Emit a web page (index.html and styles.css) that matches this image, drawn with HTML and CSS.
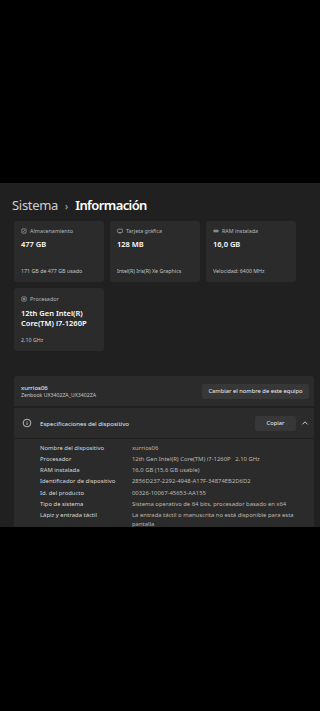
FILE: index.html
```html
<!DOCTYPE html>
<html lang="es">
<head>
<meta charset="utf-8">
<link rel="stylesheet" href="styles.css">
</head>
<body>
<div class="black-top"></div>
<main class="window">
  <h1 class="title"><span class="crumb">Sistema</span><span class="sep">›</span><span class="page">Información</span></h1>

  <section class="tiles">
    <div class="tile">
      <div class="tile-label">
        <svg class="ico" viewBox="0 0 10 10"><rect x="1.5" y="1.5" width="7" height="7" rx="0.8" fill="none" stroke="#bbb" stroke-width="1"/><path d="M3.5 6.5 L6.5 3.5" stroke="#bbb" stroke-width="1"/></svg>
        <span>Almacenamiento</span>
      </div>
      <div class="tile-value">477 GB</div>
      <div class="tile-sub">171 GB de 477 GB usado</div>
    </div>
    <div class="tile">
      <div class="tile-label">
        <svg class="ico" viewBox="0 0 10 10"><rect x="1" y="2" width="8" height="5.5" rx="0.8" fill="none" stroke="#bbb" stroke-width="1"/><path d="M3.5 8.7 H6.5" stroke="#bbb" stroke-width="0.9"/></svg>
        <span>Tarjeta gráfica</span>
      </div>
      <div class="tile-value">128 MB</div>
      <div class="tile-sub">Intel(R) Iris(R) Xe Graphics</div>
    </div>
    <div class="tile">
      <div class="tile-label">
        <svg class="ico" viewBox="0 0 10 10"><rect x="1" y="3" width="8" height="4" rx="0.5" fill="#aaa"/><path d="M3 3 V7 M5 3 V7 M7 3 V7" stroke="#2b2b2b" stroke-width="0.6"/></svg>
        <span>RAM instalada</span>
      </div>
      <div class="tile-value">16,0 GB</div>
      <div class="tile-sub">Velocidad: 6400 MHz</div>
    </div>
    <div class="tile tile-cpu">
      <div class="tile-label">
        <svg class="ico" viewBox="0 0 10 10"><rect x="1.5" y="1.5" width="7" height="7" rx="0.8" fill="none" stroke="#bbb" stroke-width="1"/><rect x="3.5" y="3.5" width="3" height="3" fill="#999"/></svg>
        <span>Procesador</span>
      </div>
      <div class="tile-value cpu-value">12th Gen Intel(R)<br>Core(TM) i7-1260P</div>
      <div class="tile-sub">2.10 GHz</div>
    </div>
  </section>

  <section class="device">
    <div class="device-names">
      <div class="device-name">xurrios06</div>
      <div class="device-model">Zenbook UX3402ZA_UX3402ZA</div>
    </div>
    <button class="btn rename">Cambiar el nombre de este equipo</button>
  </section>

  <section class="specs">
    <div class="specs-head">
      <svg class="info" viewBox="0 0 12 12"><circle cx="6" cy="6" r="4.6" fill="none" stroke="#e6e6e6" stroke-width="0.9"/><path d="M6 5.3 V8.4" stroke="#e6e6e6" stroke-width="0.9"/><circle cx="6" cy="3.8" r="0.55" fill="#e6e6e6"/></svg>
      <span class="specs-title">Especificaciones del dispositivo</span>
      <button class="btn copy">Copiar</button>
      <svg class="chev" viewBox="0 0 10 10"><path d="M2.5 6.3 L5 3.8 L7.5 6.3" fill="none" stroke="#ddd" stroke-width="0.9"/></svg>
    </div>
    <dl class="specs-body">
      <dt>Nombre del dispositivo</dt><dd>xurrios06</dd>
      <dt>Procesador</dt><dd>12th Gen Intel(R) Core(TM) i7-1260P&nbsp;&nbsp;&nbsp;2.10 GHz</dd>
      <dt>RAM instalada</dt><dd>16,0 GB (15,6 GB usable)</dd>
      <dt>Identificador de dispositivo</dt><dd>2856D237-2292-4948-A17F-34874EB2D6D2</dd>
      <dt>Id. del producto</dt><dd>00326-10067-45653-AA155</dd>
      <dt>Tipo de sistema</dt><dd>Sistema operativo de 64 bits, procesador basado en x64</dd>
      <dt>Lápiz y entrada táctil</dt><dd>La entrada táctil o manuscrita no está disponible para esta pantalla</dd>
    </dl>
  </section>
</main>
</body>
</html>
```

FILE: styles.css
```css
* { box-sizing: border-box; }
html, body { margin: 0; padding: 0; background: #000; }
body {
  width: 320px;
  height: 711px;
  overflow: hidden;
  font-family: "Noto Sans", "Open Sans", sans-serif;
  color: #fff;
}
.black-top { height: 183px; }
.window {
  height: 344px;
  overflow: hidden;
  background: #202020;
  padding: 14px 6px 0 14px;
}
.title {
  margin: 0 0 0 -2px;
  font-size: 13px;
  line-height: 16px;
  font-weight: 400;
  display: flex;
  align-items: baseline;
}
.crumb { color: #cfcfcf; letter-spacing: -0.3px; }
.sep { color: #bbb; font-size: 10px; margin: 0 7px 0 7px; }
.page { font-weight: 600; color: #fff; letter-spacing: -0.6px; }

.tiles {
  margin-top: 7px;
  width: 282px;
  display: grid;
  grid-template-columns: repeat(3, 1fr);
  column-gap: 6px;
  row-gap: 6px;
}
.tile {
  background: #2b2b2b;
  border-radius: 3px;
  height: 61px;
  padding: 6px 7px 7px 7px;
  display: flex;
  flex-direction: column;
}
.tile-cpu { height: 63px; padding-top: 7px; }
.tile-label {
  display: flex;
  align-items: center;
  gap: 3px;
  font-size: 5.4px;
  line-height: 8px;
  color: #b8b8b8;
}
.ico { width: 6px; height: 6px; flex: none; }
.tile-value {
  margin-top: 4px;
  font-size: 7.5px;
  line-height: 10px;
  font-weight: 600;
  color: #fff;
}
.cpu-value { margin-top: 5px; }
.tile-sub {
  margin-top: auto;
  font-size: 5.3px;
  line-height: 7px;
  color: #c4c4c4;
}

.device {
  margin-top: 25px;
  height: 30px;
  background: #2b2b2b;
  border-radius: 3px 3px 0 0;
  display: flex;
  align-items: center;
  justify-content: space-between;
  padding: 0 5px 0 7px;
}
.device-name { font-size: 6px; line-height: 8px; color: #fff; }
.device-model { font-size: 5.2px; line-height: 7px; color: #c8c8c8; }
.btn {
  font-family: inherit;
  border: none;
  background: #373737;
  color: #f0f0f0;
  border-radius: 2px;
  padding: 0;
  font-size: 5.8px;
  height: 15px;
}
.rename { width: 107px; }

.specs { margin-top: 2px; }
.specs-head {
  height: 30px;
  background: #2b2b2b;
  display: flex;
  align-items: center;
  padding: 0 0 0 8px;
}
.info { width: 10px; height: 10px; flex: none; }
.specs-title {
  margin-left: 8px;
  font-size: 6.1px;
  color: #e6e6e6;
  flex: 1;
}
.copy { width: 41px; }
.chev { width: 10px; height: 10px; margin: 0 4px 0 4px; flex: none; }

.specs-body {
  margin: 1px 0 0 0;
  background: #2b2b2b;
  padding: 4.5px 0 10px 26px;
  display: grid;
  grid-template-columns: 92px 166px;
  row-gap: 2.3px;
  font-size: 5.9px;
  line-height: 9px;
}
.specs-body dt { color: #d8d8d8; }
.specs-body dd { margin: 0; color: #b8b8b8; }
```
